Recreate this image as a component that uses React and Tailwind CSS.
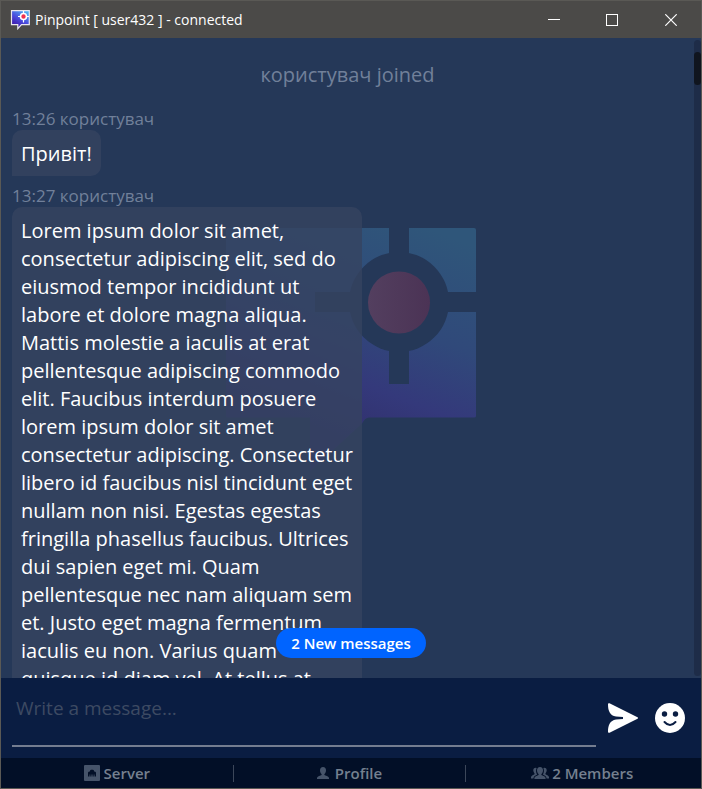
import React from "react";

const MESSAGES = [
  { time: "13:26", user: "користувач", text: "Привіт!" },
  {
    time: "13:27",
    user: "користувач",
    text: "Lorem ipsum dolor sit amet, consectetur adipiscing elit, sed do eiusmod tempor incididunt ut labore et dolore magna aliqua. Mattis molestie a iaculis at erat pellentesque adipiscing commodo elit. Faucibus interdum posuere lorem ipsum dolor sit amet consectetur adipiscing. Consectetur libero id faucibus nisl tincidunt eget nullam non nisi. Egestas egestas fringilla phasellus faucibus. Ultrices dui sapien eget mi. Quam pellentesque nec nam aliquam sem et. Justo eget magna fermentum iaculis eu non. Varius quam quisque id diam vel. At tellus at",
  },
];

function AppIcon() {
  return (
    <svg width="20" height="20" viewBox="0 0 20 20" className="mt-px" aria-hidden="true">
      <defs>
        <linearGradient id="app-fill" x1="0.2" y1="1" x2="0.8" y2="0">
          <stop offset="0" stopColor="#3b0a9c" />
          <stop offset="0.5" stopColor="#4a49dc" />
          <stop offset="1" stopColor="#4fb4f5" />
        </linearGradient>
      </defs>
      <path d="M1.500.7h17.800v14h-7.800l-3.700 4v-4H1.500z" fill="url(#app-fill)" stroke="#e9e6ee" strokeWidth="1.200" />
      <circle cx="13.500" cy="6.500" r="3" fill="#f0304e" stroke="#fff" strokeWidth="1.600" />
      <path d="M13.500 1v2.200M13.500 9.500v3M8 6.500h2.300M16.500 6.500H19" stroke="#fff" strokeWidth="1.200" />
    </svg>
  );
}

function Watermark() {
  return (
    <svg width="250" height="250" viewBox="0 0 250 250" aria-hidden="true">
      <defs>
        <linearGradient id="wm-fill" gradientUnits="userSpaceOnUse" x1="120" y1="210" x2="200" y2="0">
          <stop offset="0" stopColor="#31306c" />
          <stop offset="0.250" stopColor="#34397b" />
          <stop offset="0.550" stopColor="#30497a" />
          <stop offset="1" stopColor="#2f567a" />
        </linearGradient>
        <linearGradient id="wm-dot">
          <stop offset="0" stopColor="#533f5f" />
          <stop offset="1" stopColor="#4b3355" />
        </linearGradient>
      </defs>
      <path d="M2 0h246q2 0 2 2v186q0 1.500-2 1.500H143q-4 0-7 6L84 243v-53.500H2q-2 0-2-2V2q0-2 2-2z" fill="url(#wm-fill)" />
      <circle cx="173" cy="74" r="50" fill="#253858" />
      <path d="M163 0h20v40h-20zM163 110h20v46h-20zM89 64h50v20H89zM210 64h40v20h-40z" fill="#253858" />
      <circle cx="173" cy="74.500" r="31" fill="url(#wm-dot)" />
    </svg>
  );
}

function SendIcon() {
  return (
    <svg width="30" height="30" viewBox="0 0 30 30" fill="#fff" aria-hidden="true">
      <path d="M0 1.200Q0-.3 1.500.3L29.500 14.300Q30.600 15 29.500 15.700L1.500 29.700Q0 30.300 0 28.800C0 22 2 17.500 8 16.500L15 16V14L8 13.500C2 12.500 0 8 0 1.200z" />
    </svg>
  );
}

function SmileIcon() {
  return (
    <svg width="30" height="30" viewBox="0 0 30 30" aria-hidden="true">
      <circle cx="15" cy="15" r="15" fill="#fff" />
      <circle cx="9.500" cy="11" r="2.700" fill="#0a1d42" />
      <circle cx="20.500" cy="11" r="2.700" fill="#0a1d42" />
      <path d="M9.500 19q5.500 6 11 0" fill="none" stroke="#0a1d42" strokeWidth="2" strokeLinecap="round" />
    </svg>
  );
}

function ServerIcon() {
  return (
    <svg width="16" height="16" viewBox="0 0 16 16" aria-hidden="true">
      <rect width="16" height="16" rx="1" fill="#46546a" />
      <path d="M4 11.500V7.500l1-1h1V5.500l1-.8h2l1 .8v1h1l1 1v4h-1.500v-2H9.700v2H8.500v-2h-1v2H6.300v-2h-.8v2z" fill="#020f27" />
    </svg>
  );
}

function ProfileIcon() {
  return (
    <svg width="12" height="12" viewBox="0 0 12 12" fill="#46546a" aria-hidden="true">
      <path d="M6 0c2 0 3 1.300 3 3.200S8.300 6.300 7.400 7v1c1.200.8 4 1 4.600 2.700V12H0v-1.300C.6 9 3.400 8.800 4.600 8V7C3.700 6.300 3 5.100 3 3.200S4 0 6 0z" />
    </svg>
  );
}

function MembersIcon() {
  return (
    <svg width="18" height="12" viewBox="0 0 18 12" fill="#46546a" aria-hidden="true">
      <path d="M9 0c2 0 3 1.300 3 3.200S11.300 6.300 10.400 7v1c1.200.8 3.600 1 4.200 2.700V12H3.400v-1.300C4 9 6.400 8.800 7.600 8V7C6.700 6.300 6 5.100 6 3.200S7 0 9 0z" />
      <path d="M4.800.8C3 .8 2.200 2 2.300 3.600c.1 1.300.6 2 1.200 2.700v.9C2.600 8 .5 8.300 0 10v1.500h2.400C2.500 9 4.500 8.500 6.200 7.500 5 6 4.600 3 5.600.9zM13.200.8c1.800 0 2.600 1.200 2.500 2.800-.1 1.300-.6 2-1.200 2.700v.9c.9.800 3 1.100 3.500 2.800v1.500h-2.400c-.1-2.500-2.100-3-3.800-4 1.200-1.500 1.600-4.500.6-6.600z" />
    </svg>
  );
}

function TitleBar() {
  return (
    <header className="flex h-[37px] shrink-0 items-center bg-[#4b4a48] pl-[9px]">
      <AppIcon />
      <h1 className="ml-[5px] flex-1 truncate text-[14px] leading-5 text-white">Pinpoint [ user432 ] - connected</h1>
      <button type="button" aria-label="Minimize" className="flex h-full w-[58px] items-center justify-center">
        <svg width="12" height="12" viewBox="0 0 12 12" stroke="#fff"><path d="M0 5.500h12" /></svg>
      </button>
      <button type="button" aria-label="Maximize" className="flex h-full w-[58px] items-center justify-center">
        <svg width="12" height="12" viewBox="0 0 12 12" stroke="#fff" fill="none"><rect x=".5" y=".5" width="11" height="11" /></svg>
      </button>
      <button type="button" aria-label="Close" className="flex h-full w-[60px] items-center justify-center">
        <svg width="12" height="12" viewBox="0 0 12 12" stroke="#fff" strokeWidth="1.200"><path d="M.3.3l11.400 11.400M11.700.3L.3 11.700" /></svg>
      </button>
    </header>
  );
}

function Message({ time, user, text }) {
  return (
    <article className="flex flex-col items-start">
      <p className="text-[17px] leading-[23px] text-[#71809a]">{time} {user}</p>
      <p className="max-w-[350px] rounded-[10px] rounded-bl-none bg-[#364360]/80 px-[9px] pt-[10px] pb-2 text-[20px] leading-7 text-white">{text}</p>
    </article>
  );
}

export default function App() {
  return (
    <div className="flex h-screen flex-col overflow-hidden border border-[#5a5955] bg-[#253858] font-['Open_Sans','Noto_Sans',sans-serif]">
      <TitleBar />

      <main className="relative flex min-h-0 flex-1">
        <div className="absolute inset-x-0 top-[190px] flex justify-center">
          <Watermark />
        </div>
        <section aria-label="Messages" className="relative min-w-0 flex-1 overflow-hidden px-[11px] pt-[23px]">
          <p className="mb-[18px] text-center text-[20px] leading-7 text-[#71809a]">користувач joined</p>
          <div className="flex flex-col gap-2">
            {MESSAGES.map((m) => <Message key={m.time} {...m} />)}
          </div>
        </section>
        <div className="my-[2px] w-[7px] shrink-0 rounded-full bg-[#1e2c48] pt-3">
          <div className="h-[33px] rounded-full bg-[#10151f]" />
        </div>
        <div className="absolute inset-x-0 bottom-5 flex justify-center">
          <button type="button" className="h-[30px] w-[150px] rounded-full bg-[#0064ff] text-[15px] leading-5 font-semibold text-white">
            2 New messages
          </button>
        </div>
      </main>

      <form className="flex h-20 shrink-0 items-center bg-[#0a1d42] pr-4 pl-[11px]">
        <input
          type="text"
          aria-label="Message"
          placeholder="Write a message..."
          className="mb-[10px] h-[68px] min-w-0 flex-1 border-b-2 border-[#747d90] bg-transparent px-1 pb-2 text-[19px] text-white outline-none placeholder:text-[#3d4a62]"
        />
        <button type="submit" aria-label="Send" className="ml-3 shrink-0"><SendIcon /></button>
        <button type="button" aria-label="Emoji" className="ml-[17px] shrink-0"><SmileIcon /></button>
      </form>

      <nav className="flex h-[30px] shrink-0 items-center bg-[#020f27] pr-[3px] text-[15px] leading-5 font-semibold text-[#75808f]">
        <button type="button" className="flex flex-1 items-center justify-center gap-1"><ServerIcon />Server</button>
        <span className="h-[17px] w-px bg-[#3c475a]" />
        <button type="button" className="flex flex-1 items-center justify-center gap-[6px]"><ProfileIcon />Profile</button>
        <span className="h-[17px] w-px bg-[#3c475a]" />
        <button type="button" className="flex flex-1 items-center justify-center gap-[3px]"><MembersIcon />2 Members</button>
      </nav>
    </div>
  );
}
